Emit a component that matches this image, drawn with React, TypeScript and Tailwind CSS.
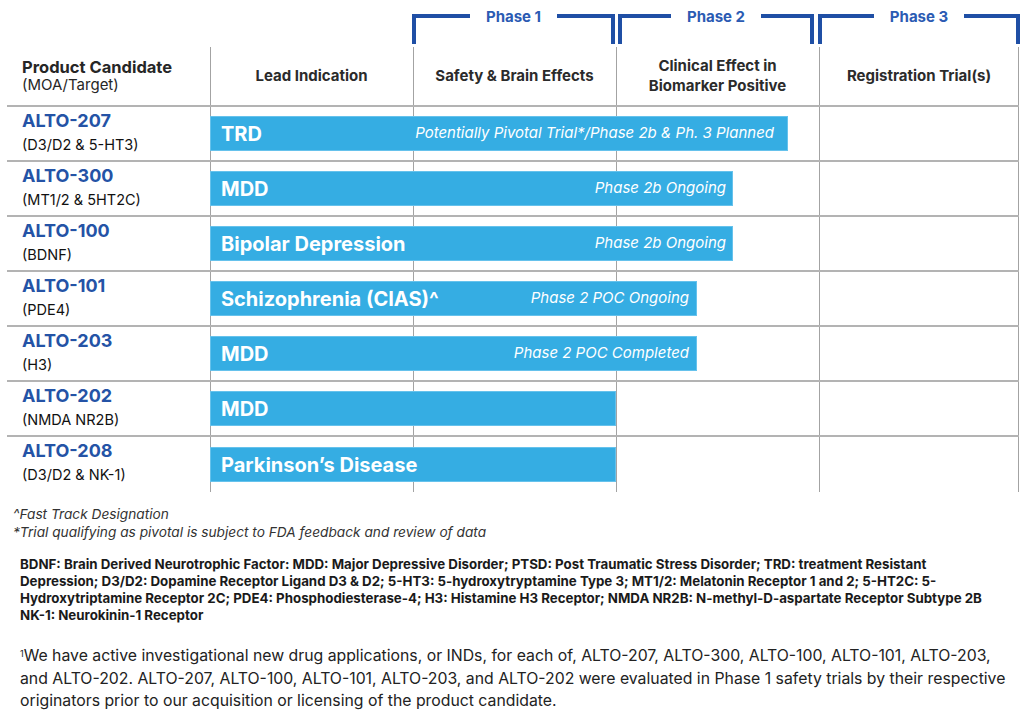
const rows = [
  {
    id: "ALTO-207",
    moa: "(D3/D2 & 5-HT3)",
    label: "TRD",
    note: "Potentially Pivotal Trial*/Phase 2b & Ph. 3 Planned",
    bar: "w-[578px] pr-[13px]",
  },
  { id: "ALTO-300", moa: "(MT1/2 & 5HT2C)", label: "MDD", note: "Phase 2b Ongoing", bar: "w-[523px] pr-[6px]" },
  { id: "ALTO-100", moa: "(BDNF)", label: "Bipolar Depression", note: "Phase 2b Ongoing", bar: "w-[523px] pr-[6px]" },
  { id: "ALTO-101", moa: "(PDE4)", label: "Schizophrenia (CIAS)^", note: "Phase 2 POC Ongoing", bar: "w-[487px] pr-[7px]" },
  { id: "ALTO-203", moa: "(H3)", label: "MDD", note: "Phase 2 POC Completed", bar: "w-[487px] pr-[7px]" },
  { id: "ALTO-202", moa: "(NMDA NR2B)", label: "MDD", note: "", bar: "w-[406px] pr-[7px]" },
  { id: "ALTO-208", moa: "(D3/D2 & NK-1)", label: "Parkinson\u2019s Disease", note: "", bar: "w-[406px] pr-[7px]" },
];

function PhaseBracket({ label, className }: { label: string; className: string }) {
  return (
    <div className={`flex items-start ${className}`}>
      <div className="mt-[6px] h-[30px] flex-1 border-l-4 border-t-4 border-[#1f4fa5]" />
      <div className="px-4 pt-[1px] text-[15px] font-bold leading-[16px] text-[#2b5bb3]">{label}</div>
      <div className="mt-[6px] h-[30px] flex-1 border-r-4 border-t-4 border-[#1f4fa5]" />
    </div>
  );
}

function PhaseCells() {
  return (
    <>
      <div className="col-start-2 row-start-1 border-l border-[#a3a3a3]" />
      <div className="col-start-3 row-start-1 border-l border-[#a3a3a3]" />
      <div className="col-start-4 row-start-1 border-l border-[#a3a3a3]" />
      <div className="col-start-5 row-start-1 border-x border-[#a3a3a3]" />
    </>
  );
}

export default function App() {
  return (
    <div className="h-[718px] w-[1025px] overflow-hidden bg-white font-[Inter,'Liberation_Sans',sans-serif] text-[#2b2b2b]">
      {/* phase brackets */}
      <div className="flex h-[47px] pl-[412px] pt-[8px]">
        <PhaseBracket label="Phase 1" className="w-[203px]" />
        <PhaseBracket label="Phase 2" className="ml-[3px] w-[196px]" />
        <PhaseBracket label="Phase 3" className="ml-[4px] w-[202px]" />
      </div>

      <div className="ml-[7px] w-[1012px]">
        {/* header */}
        <div className="grid h-[60px] grid-cols-[203px_203px_203px_203px_200px] border-b-2 border-[#b3b3b3] text-[15px] leading-[18px]">
          <div className="col-start-1 row-start-1 flex flex-col justify-center pl-[15px] text-[#262626]">
            <span className="text-[16.5px] font-bold">Product Candidate</span>
            <span>(MOA/Target)</span>
          </div>
          <PhaseCells />
          <div className="col-start-2 row-start-1 flex items-center justify-center font-bold">Lead Indication</div>
          <div className="col-start-3 row-start-1 flex items-center justify-center font-bold">Safety &amp; Brain Effects</div>
          <div className="col-start-4 row-start-1 flex flex-col items-center justify-center font-bold leading-[20px]">
            <span>Clinical Effect in</span>
            <span>Biomarker Positive</span>
          </div>
          <div className="col-start-5 row-start-1 flex items-center justify-center font-bold">Registration Trial(s)</div>
        </div>

        {/* candidates */}
        {rows.map((r, i) => (
          <div
            key={r.id}
            className={`grid h-[55px] grid-cols-[203px_203px_203px_203px_200px] ${
              i < rows.length - 1 ? "border-b-2 border-[#b3b3b3]" : ""
            }`}
          >
            <div className="col-start-1 row-start-1 pl-[15px] pt-[3px]">
              <div className="text-[18px] font-bold leading-[22px] text-[#2453a6]">{r.id}</div>
              <div className="mt-[4px] text-[14.5px] leading-[18px] text-[#111]">{r.moa}</div>
            </div>
            <PhaseCells />
            <div
              className={`z-10 col-span-4 col-start-2 row-start-1 flex h-[35px] items-center justify-between self-center border border-[#66c2ec] bg-[#35ade3] pl-[10px] text-white ${r.bar}`}
            >
              <span className="text-[20px] font-bold">{r.label}</span>
              {r.note && <span className="text-[15px] italic">{r.note}</span>}
            </div>
          </div>
        ))}
      </div>

      {/* footnotes */}
      <div className="mt-[13px] pl-[13px] text-[13.7px] italic leading-[18px] text-[#333]">
        <p>^Fast Track Designation</p>
        <p>*Trial qualifying as pivotal is subject to FDA feedback and review of data</p>
      </div>

      <p className="mt-[15px] pl-[20px] text-[13.3px] font-bold leading-[17px] text-[#1a1a1a]">
        BDNF: Brain Derived Neurotrophic Factor: MDD: Major Depressive Disorder; PTSD: Post Traumatic Stress Disorder; TRD: treatment Resistant
        <br />
        Depression; D3/D2: Dopamine Receptor Ligand D3 &amp; D2; 5-HT3: 5-hydroxytryptamine Type 3; MT1/2: Melatonin Receptor 1 and 2; 5-HT2C: 5-
        <br />
        Hydroxytriptamine Receptor 2C; PDE4: Phosphodiesterase-4; H3: Histamine H3 Receptor; NMDA NR2B: N-methyl-D-aspartate Receptor Subtype 2B
        <br />
        NK-1: Neurokinin-1 Receptor
      </p>

      <p className="mt-[21px] pl-[20px] text-[15.8px] leading-[22.5px] text-[#222]">
        <sup className="text-[9px]">1</sup>We have active investigational new drug applications, or INDs, for each of, ALTO-207, ALTO-300, ALTO-100, ALTO-101, ALTO-203,
        <br />
        and ALTO-202. ALTO-207, ALTO-100, ALTO-101, ALTO-203, and ALTO-202 were evaluated in Phase 1 safety trials by their respective
        <br />
        originators prior to our acquisition or licensing of the product candidate.
      </p>
    </div>
  );
}
